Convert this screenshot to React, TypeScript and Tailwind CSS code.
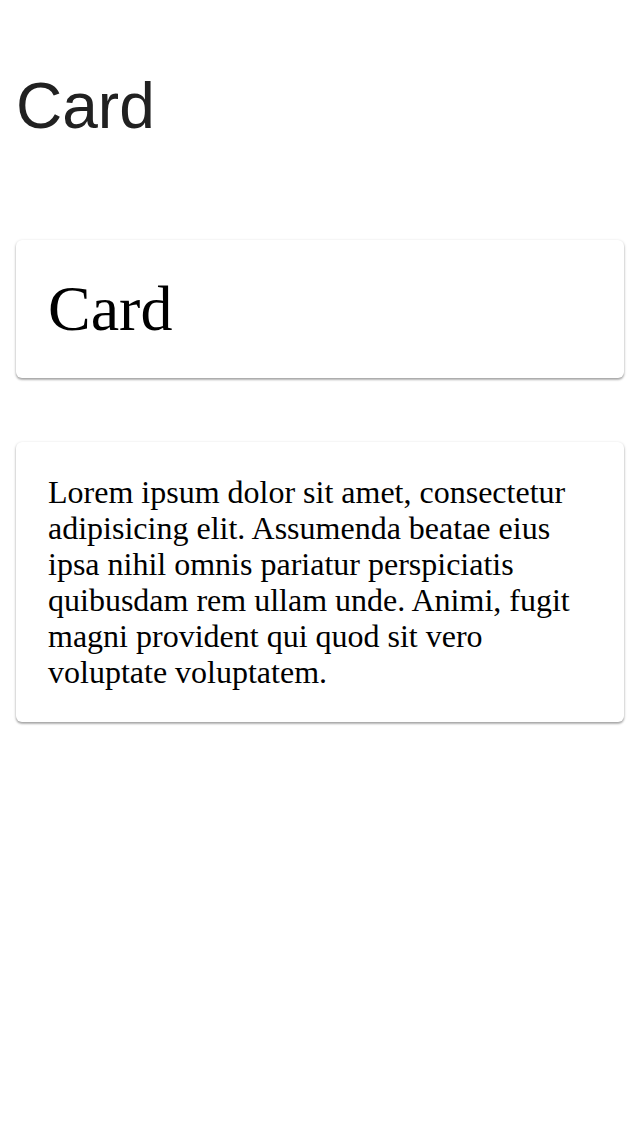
import React from 'react';

const Card = ({ children }: { children: React.ReactNode }) => {
  return (
    <div className="mx-4 rounded-md bg-white p-8 shadow-[0_1px_3px_rgba(0,0,0,0.25),0_2px_2px_rgba(0,0,0,0.2)]">
      {children}
    </div>
  );
};

const App = () => {
  return (
    <div className="min-h-[1136px] bg-white">
      <h1 className="px-4 pt-[69px] text-[64px] leading-[74px] text-[#212121] font-['Liberation_Sans',Arial,sans-serif]">
        Card
      </h1>

      <div className="mt-[97px] flex flex-col gap-16 font-['Liberation_Serif','Times_New_Roman',serif] text-black">
        {/* Title card */}
        <Card>
          <h2 className="text-[64px] leading-[74px]">Card</h2>
        </Card>

        {/* Text card */}
        <Card>
          <p className="text-[32px] leading-[36px]">
            Lorem ipsum dolor sit amet, consectetur adipisicing elit. Assumenda beatae eius ipsa nihil omnis
            pariatur perspiciatis quibusdam rem ullam unde. Animi, fugit magni provident qui quod sit vero
            voluptate voluptatem.
          </p>
        </Card>
      </div>
    </div>
  );
};

export default App;
